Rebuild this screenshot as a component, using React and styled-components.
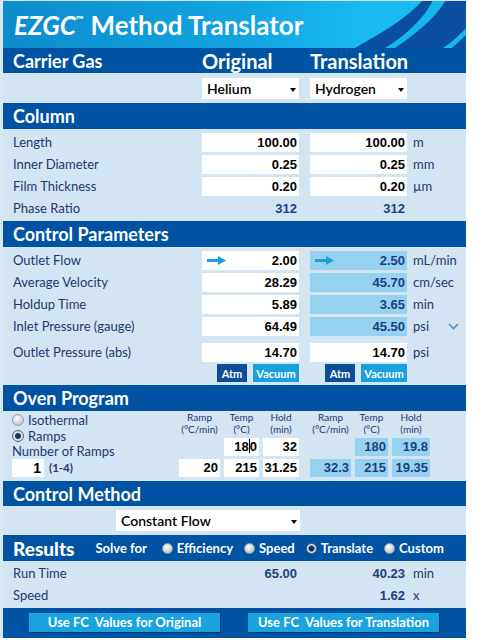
import React from 'react';
import styled, { createGlobalStyle } from 'styled-components';

const SANS = `Lato, "Open Sans", "Noto Sans", sans-serif`;
const NUM = `"Liberation Sans", Arial, sans-serif`;
const NAVY = '#1b3a73';
const BAR = '#0052a2';
const CALC = '#96d2f0';
const CALC_TEXT = '#1d3f82';

const GlobalStyle = createGlobalStyle`
  html, body {
    margin: 0;
    padding: 0;
    background: #fff;
  }
  body {
    font-family: ${SANS};
  }
`;

const Page = styled.div`
  display: inline-block;
  padding: 1px 0 0 3px;
  background: #d6e6f3;
`;

const Translator = styled.div`
  width: 463px;
  display: flex;
  flex-direction: column;
  background: #d3e4f2;
  color: ${NAVY};
`;

/* ---------- banner ---------- */

const Banner = styled.header`
  position: relative;
  height: 47px;
  display: flex;
  align-items: center;
  padding-left: 11px;
  overflow: hidden;
  background: linear-gradient(90deg, #0e8ccd 0%, #11a3e0 50%, #19b9f1 78%);
`;

const BannerArt = styled.svg`
  position: absolute;
  top: 0;
  left: 0;
`;

const Title = styled.h1`
  position: relative;
  margin: 0;
  color: #fff;
  font: 700 26px/1 ${SANS};

  em {
    font-style: italic;
  }
  sup {
    font-size: 10px;
    vertical-align: 12px;
    margin-right: 7px;
  }
`;

/* ---------- bars ---------- */

const Bar = styled.div`
  height: ${(p) => p.$h || 26}px;
  flex-shrink: 0;
  background: ${BAR};
  color: #fff;
  display: flex;
  align-items: center;
  padding-left: 10px;
`;

const BarGrid = styled(Bar)`
  display: grid;
  grid-template-columns: 189px 108px 103px 1fr;
`;

const BarTitle = styled.h2`
  margin: 0;
  font: ${(p) => (p.$big ? 900 : 700)} 18px/1 ${SANS};
  font-size: ${(p) => p.$size || (p.$big ? 19 : 18)}px;
`;

/* ---------- panels and rows ---------- */

const Panel = styled.section`
  display: flex;
  flex-direction: column;
  gap: ${(p) => p.$gap ?? 3}px;
  padding: ${(p) => p.$pad || '4px 0 3px'};
`;

const Row = styled.div`
  display: grid;
  grid-template-columns: 189px 108px 103px 1fr;
  align-items: center;
  height: ${(p) => p.$h || 19}px;
  padding-left: 10px;
  margin-top: ${(p) => p.$mt || 0}px;
`;

const Label = styled.span`
  font: 400 13px/1 ${SANS};
  color: ${NAVY};
  white-space: nowrap;
`;

const Unit = styled.span`
  display: flex;
  align-items: center;
  font: 400 13px/1 ${SANS};
  color: ${NAVY};
`;

const Field = styled.div`
  width: 97px;
  height: 19px;
  box-sizing: border-box;
  display: flex;
  align-items: center;
  padding: 0 2px 0 5px;
  background: ${(p) => (p.$calc ? CALC : '#fff')};
  color: ${(p) => (p.$calc ? CALC_TEXT : '#000')};
  font: 700 13px/1 ${NUM};

  span {
    margin-left: auto;
  }
`;

const Value = styled.span`
  width: 97px;
  box-sizing: border-box;
  padding-right: 2px;
  text-align: right;
  color: ${CALC_TEXT};
  font: 700 13px/1 ${NUM};
`;

const Select = styled.div`
  width: ${(p) => p.$w || 97}px;
  height: 21px;
  box-sizing: border-box;
  margin-left: ${(p) => p.$ml || 0}px;
  display: flex;
  align-items: center;
  justify-content: space-between;
  padding: 0 3px 0 5px;
  background: #fff;
  color: #000;
  font: 600 14px/1 ${SANS};

  &::after {
    content: '';
    border-left: 3.5px solid transparent;
    border-right: 3.5px solid transparent;
    border-top: 4px solid #000;
    margin-top: 2px;
  }
`;

const ButtonPair = styled.div`
  width: 97px;
  display: flex;
  justify-content: flex-end;
  gap: 6px;
`;

const SmallButton = styled.button`
  width: ${(p) => p.$w}px;
  height: 18px;
  padding: 0;
  border: 0;
  background: ${(p) => (p.$dark ? '#0b4e95' : '#1aa0dc')};
  color: #fff;
  font: 700 11px/1 ${SANS};
  cursor: pointer;
`;

/* ---------- oven program ---------- */

const OvenPanel = styled.section`
  display: flex;
  padding: 0 0 4px;
`;

const OvenLeft = styled.div`
  width: 176px;
  box-sizing: border-box;
  padding: 1px 0 0 9px;
  display: flex;
  flex-direction: column;
`;

const OptionLine = styled.label`
  display: flex;
  align-items: center;
  gap: 4px;
  height: ${(p) => p.$h || 16}px;
  font: 400 13px/1 ${SANS};
  color: ${(p) => (p.$light ? '#fff' : NAVY)};
  font-weight: ${(p) => (p.$light ? 700 : 400)};
  white-space: nowrap;
`;

const Radio = styled.span`
  width: ${(p) => p.$size || 12}px;
  height: ${(p) => p.$size || 12}px;
  box-sizing: border-box;
  border-radius: 50%;
  flex-shrink: 0;
  border: 1px solid ${(p) => (p.$on ? '#5a6470' : '#9aa0a6')};
  background: ${(p) =>
    p.$on
      ? 'radial-gradient(circle, #0a3566 0 2.4px, #5d86b2 3px, #e8eaec 3.6px, #b9bdc1 100%)'
      : 'radial-gradient(circle at 40% 35%, #ffffff 0, #dcdcdc 45%, #a9adb1 100%)'};
`;

const CountRow = styled.div`
  margin-top: auto;
  display: flex;
  align-items: center;
  gap: 5px;
`;

const CountBox = styled.div`
  width: 32px;
  height: 18px;
  box-sizing: border-box;
  padding-right: 3px;
  background: #fff;
  color: #000;
  text-align: right;
  font: 700 14px/18px ${NUM};
`;

const Hint = styled.span`
  font: 700 11.5px/1 ${SANS};
  color: ${NAVY};
`;

const OvenGrid = styled.div`
  display: grid;
  grid-template-columns: 41px 35px 36px 3px 41px 33px 38px;
  grid-template-rows: 24px 18px 18px;
  column-gap: 4px;
  row-gap: 3px;
`;

const ColHead = styled.div`
  align-self: center;
  justify-self: center;
  display: flex;
  flex-direction: column;
  align-items: center;
  white-space: nowrap;
  font: 400 10px/12px ${SANS};
  color: ${NAVY};
`;

const OvenCell = styled.div`
  height: 18px;
  box-sizing: border-box;
  padding-right: 2px;
  text-align: right;
  background: ${(p) => (p.$calc ? CALC : '#fff')};
  color: ${(p) => (p.$calc ? CALC_TEXT : '#000')};
  font: 700 13px/18px ${NUM};
  white-space: nowrap;
`;

const Caret = styled.i`
  display: inline-block;
  width: 1px;
  height: 14px;
  margin: 0 0 -2px;
  background: #000;
  vertical-align: baseline;
`;

/* ---------- results ---------- */

const SolveFor = styled.span`
  margin: 1px 15px 0 21px;
  font: 700 13px/1 ${SANS};
`;

const SolveOptions = styled.div`
  display: flex;
  align-items: center;
  gap: 11px;
  margin-top: 1px;
`;

const Footer = styled.div`
  height: 30px;
  box-sizing: border-box;
  background: ${BAR};
  display: flex;
  align-items: flex-start;
  gap: 28px;
  padding: 5px 0 0 26px;
`;

const WideButton = styled.button`
  width: 191px;
  height: 19px;
  padding: 0;
  border: 0;
  background: #1aa3dc;
  box-shadow: 1px 1px 0 #0a3a70;
  color: #fff;
  font: 700 13px/19px ${SANS};
  white-space: pre;
  cursor: pointer;
`;

/* ---------- drawings ---------- */

const FlowArrow = () => (
  <svg width="19" height="9" viewBox="0 0 19 9">
    <rect x="0" y="3" width="12" height="3" fill="#1e9fdc" />
    <polygon points="11,0 19,4.5 11,9" fill="#1e9fdc" />
  </svg>
);

const Chevron = () => (
  <svg width="11" height="7" viewBox="0 0 11 7" style={{ marginLeft: 19 }}>
    <polyline points="1,1 5.5,5.5 10,1" fill="none" stroke="#4b8fcc" strokeWidth="1.6" />
  </svg>
);

const Swoosh = () => (
  <BannerArt width="463" height="47" viewBox="0 0 463 47">
    <path d="M352 47 C 382 30, 405 16, 420 -1 L 463 -1 L 463 47 Z" fill="#0a4fa0" />
    <path d="M382 47 C 405 33, 422 16, 430 -1 L 443 -1 C 432 18, 410 35, 392 47 Z" fill="#18b6ee" />
    <path d="M440 47 C 450 40, 457 34, 463 27 L 463 34 C 458 39, 453 43, 449 47 Z" fill="#18b6ee" />
  </BannerArt>
);

/* ---------- data ---------- */

const columnRows = [
  { label: 'Length', a: '100.00', b: '100.00', unit: 'm' },
  { label: 'Inner Diameter', a: '0.25', b: '0.25', unit: 'mm' },
  { label: 'Film Thickness', a: '0.20', b: '0.20', unit: 'µm' },
];

const controlRows = [
  { label: 'Average Velocity', a: '28.29', b: '45.70', unit: 'cm/sec' },
  { label: 'Holdup Time', a: '5.89', b: '3.65', unit: 'min' },
];

const ovenHeads = [
  ['Ramp', '(°C/min)'],
  ['Temp', '(°C)'],
  ['Hold', '(min)'],
];

export default function App() {
  return (
    <>
      <GlobalStyle />
      <Page>
        <Translator>
          <Banner>
            <Swoosh />
            <Title>
              <em>EZGC</em>
              <sup>™</sup>
              Method Translator
            </Title>
          </Banner>

          <BarGrid $h={25}>
            <BarTitle $size={18}>Carrier Gas</BarTitle>
            <BarTitle $size={20}>Original</BarTitle>
            <BarTitle $size={20}>Translation</BarTitle>
          </BarGrid>
          <Panel $pad="5px 0 4px">
            <Row $h={21}>
              <span />
              <Select>Helium</Select>
              <Select>Hydrogen</Select>
            </Row>
          </Panel>

          <Bar>
            <BarTitle>Column</BarTitle>
          </Bar>
          <Panel>
            {columnRows.map((r) => (
              <Row key={r.label}>
                <Label>{r.label}</Label>
                <Field><span>{r.a}</span></Field>
                <Field><span>{r.b}</span></Field>
                <Unit>{r.unit}</Unit>
              </Row>
            ))}
            <Row>
              <Label>Phase Ratio</Label>
              <Value>312</Value>
              <Value>312</Value>
            </Row>
          </Panel>

          <Bar>
            <BarTitle>Control Parameters</BarTitle>
          </Bar>
          <Panel>
            <Row>
              <Label>Outlet Flow</Label>
              <Field><FlowArrow /><span>2.00</span></Field>
              <Field $calc><FlowArrow /><span>2.50</span></Field>
              <Unit>mL/min</Unit>
            </Row>
            {controlRows.map((r) => (
              <Row key={r.label}>
                <Label>{r.label}</Label>
                <Field><span>{r.a}</span></Field>
                <Field $calc><span>{r.b}</span></Field>
                <Unit>{r.unit}</Unit>
              </Row>
            ))}
            <Row>
              <Label>Inlet Pressure (gauge)</Label>
              <Field><span>64.49</span></Field>
              <Field $calc><span>45.50</span></Field>
              <Unit>psi<Chevron /></Unit>
            </Row>
            <Row $mt={4}>
              <Label>Outlet Pressure (abs)</Label>
              <Field><span>14.70</span></Field>
              <Field><span>14.70</span></Field>
              <Unit>psi</Unit>
            </Row>
            <Row $h={18} $mt={-1}>
              <span />
              <ButtonPair>
                <SmallButton $dark $w={30}>Atm</SmallButton>
                <SmallButton $w={46}>Vacuum</SmallButton>
              </ButtonPair>
              <ButtonPair>
                <SmallButton $dark $w={30}>Atm</SmallButton>
                <SmallButton $w={46}>Vacuum</SmallButton>
              </ButtonPair>
            </Row>
          </Panel>

          <Bar>
            <BarTitle>Oven Program</BarTitle>
          </Bar>
          <OvenPanel>
            <OvenLeft>
              <OptionLine><Radio />Isothermal</OptionLine>
              <OptionLine><Radio $on />Ramps</OptionLine>
              <OptionLine $h={14}>Number of Ramps</OptionLine>
              <CountRow>
                <CountBox>1</CountBox>
                <Hint>(1-4)</Hint>
              </CountRow>
            </OvenLeft>
            <OvenGrid>
              {ovenHeads.map(([a, b]) => (
                <ColHead key={`o${a}`}><span>{a}</span><span>{b}</span></ColHead>
              ))}
              <span />
              {ovenHeads.map(([a, b]) => (
                <ColHead key={`t${a}`}><span>{a}</span><span>{b}</span></ColHead>
              ))}

              <span />
              <OvenCell>18<Caret />0</OvenCell>
              <OvenCell>32</OvenCell>
              <span />
              <span />
              <OvenCell $calc>180</OvenCell>
              <OvenCell $calc>19.8</OvenCell>

              <OvenCell>20</OvenCell>
              <OvenCell>215</OvenCell>
              <OvenCell>31.25</OvenCell>
              <span />
              <OvenCell $calc>32.3</OvenCell>
              <OvenCell $calc>215</OvenCell>
              <OvenCell $calc>19.35</OvenCell>
            </OvenGrid>
          </OvenPanel>

          <Bar $h={25}>
            <BarTitle>Control Method</BarTitle>
          </Bar>
          <Panel $pad="4px 0 4px">
            <Select $w={184} $ml={113}>Constant Flow</Select>
          </Panel>

          <Bar>
            <BarTitle $big>Results</BarTitle>
            <SolveFor>Solve for</SolveFor>
            <SolveOptions>
              <OptionLine $light><Radio $size={11} />Efficiency</OptionLine>
              <OptionLine $light><Radio $size={11} />Speed</OptionLine>
              <OptionLine $light><Radio $size={11} $on />Translate</OptionLine>
              <OptionLine $light><Radio $size={11} />Custom</OptionLine>
            </SolveOptions>
          </Bar>
          <Panel $gap={0} $pad="1px 0 2px">
            <Row $h={22}>
              <Label>Run Time</Label>
              <Value>65.00</Value>
              <Value>40.23</Value>
              <Unit>min</Unit>
            </Row>
            <Row $h={22}>
              <Label>Speed</Label>
              <span />
              <Value>1.62</Value>
              <Unit>x</Unit>
            </Row>
          </Panel>

          <Footer>
            <WideButton>{'Use FC  Values for Original'}</WideButton>
            <WideButton>{'Use FC  Values for Translation'}</WideButton>
          </Footer>
        </Translator>
      </Page>
    </>
  );
}
